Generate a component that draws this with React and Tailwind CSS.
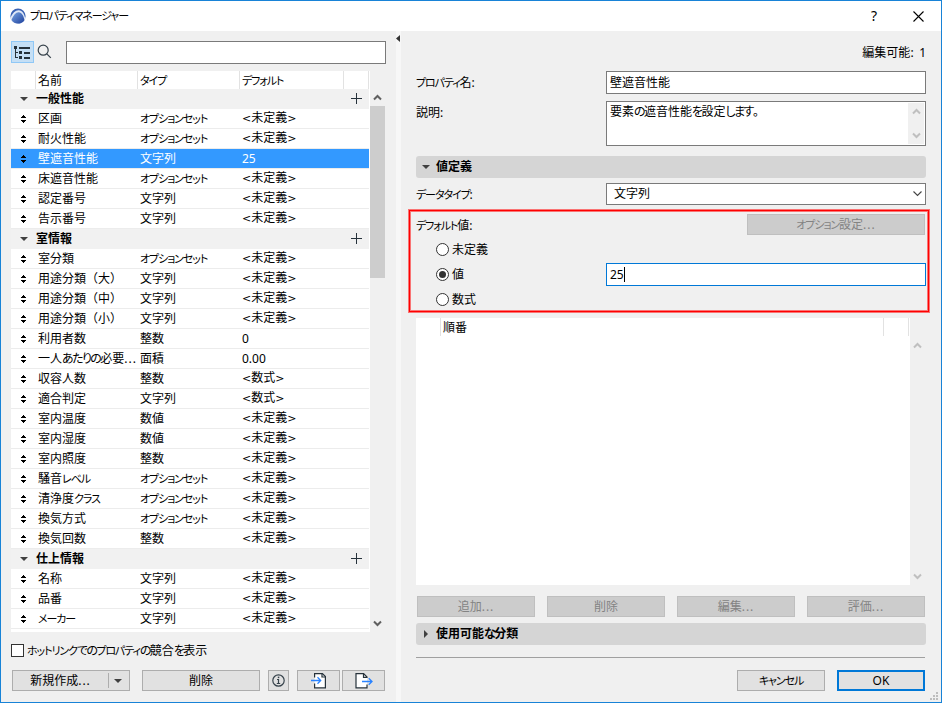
// src/App.jsx
import React, { useState } from "react";

const UNDEF = "<未定義>";

const groups = [
  {
    name: "一般性能",
    items: [
      ["区画", "オプションセット", UNDEF],
      ["耐火性能", "オプションセット", UNDEF],
      ["壁遮音性能", "文字列", "25"],
      ["床遮音性能", "オプションセット", UNDEF],
      ["認定番号", "文字列", UNDEF],
      ["告示番号", "文字列", UNDEF],
    ],
  },
  {
    name: "室情報",
    items: [
      ["室分類", "オプションセット", UNDEF],
      ["用途分類（大）", "文字列", UNDEF],
      ["用途分類（中）", "文字列", UNDEF],
      ["用途分類（小）", "文字列", UNDEF],
      ["利用者数", "整数", "0"],
      ["一人あたりの必要...", "面積", "0.00"],
      ["収容人数", "整数", "<数式>"],
      ["適合判定", "文字列", "<数式>"],
      ["室内温度", "数値", UNDEF],
      ["室内湿度", "数値", UNDEF],
      ["室内照度", "整数", UNDEF],
      ["騒音レベル", "オプションセット", UNDEF],
      ["清浄度クラス", "オプションセット", UNDEF],
      ["換気方式", "オプションセット", UNDEF],
      ["換気回数", "整数", UNDEF],
    ],
  },
  {
    name: "仕上情報",
    items: [
      ["名称", "文字列", UNDEF],
      ["品番", "文字列", UNDEF],
      ["メーカー", "文字列", UNDEF],
    ],
  },
];

const runStyles = [
  [/^[\u30a0-\u30ff]/, "text-[11px] tracking-[-1.1px]"],
  [/^[\u3040-\u309f]/, "tracking-[-1.6px]"],
  [/^[<>]/, "font-['DejaVu_Sans'] text-[11px]"],
  [/^[（）]/, "[font-feature-settings:normal]"],
  [/^\.\.\./, "tracking-[1px]"],
  [/^: /, "tracking-[1.2px]"],
];

// kana are set narrower than kanji, as in a UI font
function T({ children }) {
  return (
    <span className="whitespace-nowrap">
      {children.split(/([\u3040-\u309f]+|[\u30a0-\u30ff]+|[<>（）]|\.\.\.|: )/).map((s, i) => {
        const run = runStyles.find(([re]) => re.test(s));
        return run ? <span key={i} className={run[1]}>{s}</span> : s;
      })}
    </span>
  );
}

function Chevron({ up, color = "#606060" }) {
  return (
    <svg width="9" height="7" viewBox="0 0 9 7" fill="none" stroke={color} strokeWidth="2">
      <path d={up ? "M1 5.5 4.5 2 8 5.5" : "M1 1.5 4.5 5 8 1.5"} />
    </svg>
  );
}

function Down({ className = "" }) {
  return (
    <svg width="8" height="4" viewBox="0 0 8 4" className={className}>
      <path d="M0 0h8L4 4z" fill="#404040" />
    </svg>
  );
}

function Btn({ children, disabled, className = "" }) {
  return (
    <button
      type="button"
      disabled={disabled}
      className={`flex h-[21px] items-center justify-center border ${
        disabled ? "border-[#bfbfbf] bg-[#cccccc] text-[#838383]" : "border-[#adadad] bg-[#e1e1e1]"
      } ${className}`}
    >
      {children}
    </button>
  );
}

function Radio({ label, checked, onChange }) {
  return (
    <label className="flex h-[25px] items-center gap-[3px]">
      <input type="radio" name="mode" className="sr-only" checked={checked} onChange={onChange} />
      <svg width="13" height="13" viewBox="0 0 13 13">
        <circle cx="6.5" cy="6.5" r="6" fill="#fff" stroke="#333" />
        {checked && <circle cx="6.5" cy="6.5" r="3.5" fill="#333" />}
      </svg>
      <T>{label}</T>
    </label>
  );
}

function Section({ title, open }) {
  return (
    <div className="flex h-[22px] shrink-0 items-center rounded-[3px] bg-[#d5d5d5] font-bold">
      <span className="flex w-5 justify-center">
        {open ? (
          <Down />
        ) : (
          <svg width="4" height="8" viewBox="0 0 4 8"><path d="M0 0v8l4-4z" fill="#404040" /></svg>
        )}
      </span>
      <T>{title}</T>
    </div>
  );
}

function PropertyRow({ item, selected, onClick }) {
  return (
    <div
      onClick={onClick}
      className={`flex h-5 items-center border-b border-[#ececec] ${selected ? "bg-[#3399ff] bg-clip-padding text-white" : ""}`}
    >
      <span className="flex w-[27px] shrink-0 justify-center pr-[2px]">
        <svg width="5" height="8" viewBox="0 0 5 8" shapeRendering="crispEdges">
          <path d="M2 0h1v1h1v1h1v1H0V2h1V1h1zM0 5h5v1H4v1H3v1H2V7H1V6H0z" fill="#000" />
        </svg>
      </span>
      <span className="w-[102px] shrink-0"><T>{item[0]}</T></span>
      <span className="w-[102px] shrink-0"><T>{item[1]}</T></span>
      <span><T>{item[2]}</T></span>
    </div>
  );
}

function LeftPane() {
  const [selected, setSelected] = useState("壁遮音性能");

  return (
    <div className="flex w-[385px] shrink-0 flex-col pl-2.5 pt-2.5">
      <div className="flex h-[23px] items-start">
        <span className="flex h-[22px] w-[23px] items-center justify-center border border-[#90c8f6] bg-[#c5dff5]">
          <svg width="17" height="13" viewBox="0 0 17 13" fill="#26323b" shapeRendering="crispEdges">
            <path d="M0 0h3v3H0zM5 1h11v2H5zM5 5h3v3H5zM10 6h6v2h-6zM5 10h3v3H5zM10 11h6v2h-6z" />
            <path d="M1 3h1v9H1zM2 6h2v1H2zM2 11h2v1H2z" />
          </svg>
        </span>
        <svg className="ml-[3px] mt-[3px]" width="15" height="15" viewBox="0 0 15 15" fill="none" stroke="#36424b" strokeWidth="1.2">
          <circle cx="6.2" cy="6.2" r="5" />
          <path d="m9.8 9.8 4 4" />
        </svg>
        <input className="ml-auto h-[23px] w-80 border border-[#7a7a7a] bg-white px-1 outline-none" />
      </div>

      <div className="mt-[7px] flex h-[561px]">
        <div className="w-[359px] bg-white">
          <div className="flex h-[18px] w-[358px] items-center leading-[20px]">
            <span className="h-full w-[25px] border-r border-[#e2e2e2]" />
            <span className="h-full w-[102px] border-r border-[#e2e2e2] pl-0.5"><T>名前</T></span>
            <span className="h-full w-[102px] border-r border-[#e2e2e2] pl-0.5"><T>タイプ</T></span>
            <span className="h-full w-[104px] border-r border-[#e2e2e2] pl-0.5"><T>デフォルト</T></span>
            <span className="h-full w-[25px] border-r border-[#e2e2e2]" />
          </div>
          <div className="w-[358px]">
            {groups.map((g) => (
              <React.Fragment key={g.name}>
                <div className="flex h-5 items-center bg-[#f1f1f1] font-bold">
                  <span className="flex w-[25px] justify-center pb-px"><Down /></span>
                  <T>{g.name}</T>
                  <svg className="mb-[2px] ml-auto mr-[7px]" width="11" height="11" viewBox="0 0 11 11" shapeRendering="crispEdges">
                    <path d="M5 0h1v11H5zM0 5h11v1H0z" fill="#26323b" />
                  </svg>
                </div>
                {g.items.map((item) => (
                  <PropertyRow
                    key={item[0]}
                    item={item}
                    selected={selected === item[0]}
                    onClick={() => setSelected(item[0])}
                  />
                ))}
              </React.Fragment>
            ))}
          </div>
        </div>
        <div className="flex w-[15px] flex-col items-center pt-[23px]">
          <Chevron up />
          <div className="mt-[5px] h-[172px] w-[15px] bg-[#cdcdcd]" />
          <div className="mb-[5px] mt-auto"><Chevron /></div>
        </div>
      </div>

      <label className="mt-[11px] flex h-[15px] items-center">
        <span className="h-[13px] w-[13px] border border-[#333] bg-white" />
        <span className="ml-[3px]"><T>ホットリンクでのプロパティの競合を表示</T></span>
      </label>

      <div className="ml-px mt-3 flex">
        <Btn className="w-[118px]">
          <span className="flex flex-1 justify-center"><T>新規作成...</T></span>
          <span className="flex h-[15px] w-[21px] items-center justify-center border-l border-[#adadad]"><Down className="mr-0.5" /></span>
        </Btn>
        <Btn className="ml-3 w-[118px]"><T>削除</T></Btn>
        <Btn className="ml-2 w-[21px]">
          <svg width="13" height="13" viewBox="0 0 13 13" fill="none" stroke="#36424b" strokeWidth="1.2" className="shrink-0">
            <circle cx="6.5" cy="6.5" r="5.7" />
            <path d="M5 5.5h1.5v4M4.8 9.5h3.4" />
            <path d="M5.8 3.4h1.5" strokeWidth="1.5" />
          </svg>
        </Btn>
        <Btn className="ml-2 w-[43px]">
          <svg width="16" height="16" viewBox="0 0 16 16" fill="none" stroke="#26323b" strokeWidth="1.2">
            <path d="M3.6 4.5V.6h7.8l3 3v11.300H3.6V10.500" fill="#fff" />
            <path d="M11 .8v3.200h3.400" />
            <path d="M0 7.500h9.500M6.500 4.300l3.200 3.200-3.200 3.200" stroke="#2a83ff" strokeWidth="1.3" />
          </svg>
        </Btn>
        <Btn className="ml-0.5 w-[43px]">
          <svg width="18" height="16" viewBox="0 0 18 16" fill="none" stroke="#26323b" strokeWidth="1.2">
            <path d="M12 5V4L8.600.6H1v14.300h11V11.500" fill="#fff" />
            <path d="M8.500.8V4.400H12" />
            <path d="M7 8.500h10M13.700 5.300 17 8.500l-3.300 3.200" stroke="#2a83ff" strokeWidth="1.3" />
          </svg>
        </Btn>
      </div>
    </div>
  );
}

function RightPane() {
  const [mode, setMode] = useState("value");

  return (
    <div className="flex w-[540px] flex-col pl-[15px]">
      <div className="mt-[13px] flex h-[18px] w-[510px] items-center justify-end"><T>編集可能: 1</T></div>
      <div className="mt-[9px] flex w-[510px]">
        <span className="w-[190px] leading-[23px]"><T>プロパティ名:</T></span>
        <div className="h-[23px] w-80 border border-[#7a7a7a] bg-white pl-[3px] leading-[22px]"><T>壁遮音性能</T></div>
      </div>
      <div className="mt-[7px] flex w-[510px]">
        <span className="w-[190px] leading-[23px]"><T>説明:</T></span>
        <div className="flex h-[45px] w-80 justify-between border border-[#7a7a7a] bg-white p-px pl-[3px]">
          <span className="leading-[18px]"><T>要素の遮音性能を設定します。</T></span>
          <div className="flex w-4 flex-col items-center justify-between bg-[#f0f0f0] py-[5px]">
            <Chevron up color="#bfbfbf" />
            <Chevron color="#bfbfbf" />
          </div>
        </div>
      </div>
      <div className="mt-2.5 w-[510px]"><Section title="値定義" open /></div>
      <div className="mt-[5px] flex h-[22px] w-[510px]">
        <span className="w-[190px] leading-[23px]"><T>データタイプ:</T></span>
        <div className="flex h-[22px] w-80 items-center justify-between border border-[#7a7a7a] bg-white pl-[7px] pr-[3px]">
          <T>文字列</T>
          <svg width="9" height="6" viewBox="0 0 9 6" fill="none" stroke="#444" strokeWidth="1.1">
            <path d="m.5.5 4 4 4-4" />
          </svg>
        </div>
      </div>

      <div className="-ml-[7px] mt-[5px] h-[102px] w-[520px] border border-[#ff0000] pl-1.5 shadow-[0_0_0_1px_#f97474,inset_0_0_0_1px_#f97474]">
        <div className="flex h-[26px] items-start justify-between pt-[3px]">
          <span className="leading-[23px]"><T>デフォルト値:</T></span>
          <Btn disabled className="mr-[3px] w-[178px]"><T>オプション設定...</T></Btn>
        </div>
        <div className="flex pl-5">
          <div className="w-[170px]">
            <Radio label="未定義" checked={mode === "undef"} onChange={() => setMode("undef")} />
            <Radio label="値" checked={mode === "value"} onChange={() => setMode("value")} />
            <Radio label="数式" checked={mode === "expr"} onChange={() => setMode("expr")} />
          </div>
          <div className="mt-[26px] flex h-[23px] w-80 items-center border border-[#0078d7] bg-white pl-[3px]">
            25<span className="h-[15px] w-px bg-black" />
          </div>
        </div>
      </div>

      <div className="mt-1.5 flex h-[267px]">
        <div className="w-[494px] bg-white">
          <div className="flex h-[18px] w-[493px] leading-[20px]">
            <span className="w-[25px] border-r border-[#e2e2e2]" />
            <span className="w-[443px] border-r border-[#e2e2e2] pl-0.5"><T>順番</T></span>
            <span className="w-[25px] border-r border-[#e2e2e2]" />
          </div>
        </div>
        <div className="flex w-[15px] flex-col items-center justify-between pb-[5px] pt-6">
          <Chevron up color="#bfbfbf" />
          <Chevron color="#bfbfbf" />
        </div>
      </div>

      <div className="ml-px mt-[11px] flex gap-3">
        {["追加...", "削除", "編集...", "評価..."].map((b) => (
          <Btn key={b} disabled className="w-[118px]"><T>{b}</T></Btn>
        ))}
      </div>
      <div className="mt-1.5 w-[510px]"><Section title="使用可能な分類" /></div>
      <div className="mt-3 h-px w-[509px] bg-[#a0a0a0]" />
      <div className="mt-3 flex w-[509px] justify-end gap-3">
        <Btn className="w-[88px]"><T>キャンセル</T></Btn>
        <button type="button" className="flex h-[21px] w-[88px] items-center justify-center border-2 border-[#0078d7] bg-[#e1e1e1]">OK</button>
      </div>
      <svg className="ml-auto mr-[3px] mt-px" width="8" height="8" viewBox="0 0 8 8" fill="#bdbdbd" shapeRendering="crispEdges">
        <path d="M6 0h2v2H6zM3 3h2v2H3zM6 3h2v2H6zM0 6h2v2H0zM3 6h2v2H3zM6 6h2v2H6z" />
      </svg>
    </div>
  );
}

export default function App() {
  return (
    <div className="flex h-[703px] w-[942px] flex-col overflow-hidden border border-[#1883d7] bg-[#f0f0f0] font-['Noto_Sans','Noto_Sans_CJK_JP',sans-serif] text-[12px] leading-[18px] text-black [font-feature-settings:'palt']">
      <header className="flex h-[30px] shrink-0 items-center bg-white pl-[9px]">
        <svg width="16" height="16" viewBox="0 0 16 16">
          <defs>
            <linearGradient id="logo" x1="0" y1="0" x2="1" y2="1">
              <stop offset="0" stopColor="#7ba6e2" />
              <stop offset="1" stopColor="#1c3f9c" />
            </linearGradient>
          </defs>
          <circle cx="8" cy="8" r="7.6" fill="#3a62b4" />
          <path d="M.4 10C2.500 4.800 5.500 2 8.800 2.200c3.600.2 5.600 3.800 6.600 8.300C14.300 13.800 11.500 15.600 8 15.600 4.300 15.600 1.200 13.400.4 10z" fill="#dfe8f7" />
          <path d="M1.500 12C3.500 7 6 4.100 8.800 4.300c3 .2 5 3.600 5.600 7.900C13 14.500 10.700 15.600 8 15.600c-2.700 0-5-1.300-6.500-3.600z" fill="url(#logo)" />
        </svg>
        <span className="ml-1"><T>プロパティマネージャー</T></span>
        <span className="ml-auto mr-[36px] text-[14px]">?</span>
        <svg className="mr-[17px]" width="11" height="11" viewBox="0 0 11 11" stroke="#000" strokeWidth="1.1">
          <path d="m.5.5 10 10M10.500.5l-10 10" />
        </svg>
      </header>
      <div className="flex min-h-0 flex-1">
        <LeftPane />
        <div className="ml-2.5 w-[5px] shrink-0 bg-[#f7f7f7] pt-1">
          <svg width="4" height="7" viewBox="0 0 4 7"><path d="M4 0v7L0 3.500z" fill="#333" /></svg>
        </div>
        <RightPane />
      </div>
    </div>
  );
}
